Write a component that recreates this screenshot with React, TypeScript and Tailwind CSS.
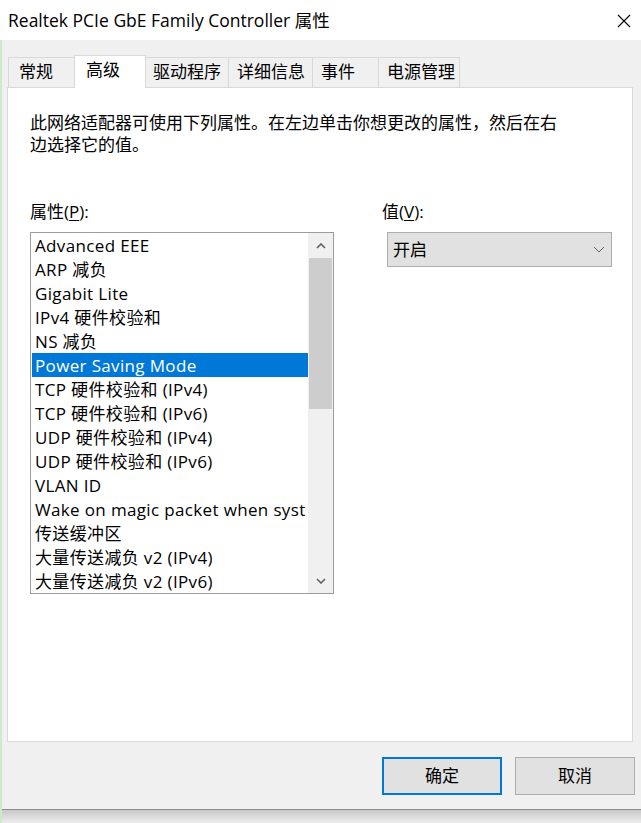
import React from 'react';

const items = [
  'Advanced EEE',
  'ARP 减负',
  'Gigabit Lite',
  'IPv4 硬件校验和',
  'NS 减负',
  'Power Saving Mode',
  'TCP 硬件校验和 (IPv4)',
  'TCP 硬件校验和 (IPv6)',
  'UDP 硬件校验和 (IPv4)',
  'UDP 硬件校验和 (IPv6)',
  'VLAN ID',
  'Wake on magic packet when syst',
  '传送缓冲区',
  '大量传送减负 v2 (IPv4)',
  '大量传送减负 v2 (IPv6)',
];

// 标签页：宽度和左内边距按截图量出来
const tabs = [
  { label: '常规', w: 'w-[68px]', pl: 'pl-[10px]' },
  { label: '高级', selected: true },
  { label: '驱动程序', w: 'w-[84px]', pl: 'pl-[8px]' },
  { label: '详细信息', w: 'w-[84px]', pl: 'pl-[8px]' },
  { label: '事件', w: 'w-[66px]', pl: 'pl-[8px]' },
  { label: '电源管理', w: 'w-[82px]', pl: 'pl-[8px]' },
];

function Chevron({ up, className }: { up?: boolean; className?: string }) {
  return (
    <svg width="10" height="6" viewBox="0 0 10 6" className={className}>
      <polyline
        points={up ? '1,5 5,1 9,5' : '1,1 5,5 9,1'}
        fill="none"
        stroke="#606060"
        strokeWidth="1.6"
      />
    </svg>
  );
}

export default function App() {
  const selected = 5;

  return (
    <div className="w-[641px] h-[823px] flex flex-col bg-[#f0f0f0] overflow-hidden text-black font-['Open_Sans','Noto_Sans_CJK_SC',sans-serif] text-[17px]">
      {/* 标题栏 */}
      <div className="h-[40px] shrink-0 bg-white flex items-center justify-between pl-[8px] pr-[10px]">
        <span className="text-[17.5px]">Realtek PCIe GbE Family Controller 属性</span>
        <svg width="14" height="14" viewBox="0 0 14 14" className="mt-[1px]">
          <path d="M1 1 L13 13 M13 1 L1 13" stroke="#000" strokeWidth="1.1" />
        </svg>
      </div>

      <div className="flex-1 flex flex-col border-l-2 border-[#cfe8cf]">
        {/* 标签 */}
        <div className="h-[47px] shrink-0 flex items-end pl-[6px]">
          {tabs.map((t) =>
            t.selected ? (
              <div
                key={t.label}
                className="relative z-10 -mx-[2px] -mb-px w-[72px] h-[33px] bg-white border border-b-0 border-[#d9d9d9] pl-[11px] pt-[3px] leading-[22px]"
              >
                {t.label}
              </div>
            ) : (
              <div
                key={t.label}
                className={`${t.w} ${t.pl} h-[30px] border-t border-l last:border-r border-[#d9d9d9] bg-[#f0f0f0] pt-[3px] leading-[22px]`}
              >
                {t.label}
              </div>
            )
          )}
        </div>

        {/* 内容面板 */}
        <div className="ml-[5px] w-[626px] h-[655px] shrink-0 bg-white border border-[#d9d9d9] pl-[22px] pt-[24px]">
          <p className="leading-[22px]">
            此网络适配器可使用下列属性。在左边单击你想更改的属性，然后在右
            <br />
            边选择它的值。
          </p>

          <div className="flex mt-[45px]">
            <div className="w-[304px]">
              <div className="leading-[22px]">
                属性(<span className="underline underline-offset-2">P</span>):
              </div>
              <div className="mt-[9px] h-[362px] border border-[#9c9c9c] flex">
                <div className="flex-1 pl-px overflow-hidden">
                  {items.map((it, i) => (
                    <div
                      key={it}
                      className={`h-[24px] leading-[26px] pl-[3px] tracking-[0.35px] whitespace-nowrap overflow-hidden ${
                        i === selected ? 'bg-[#0078d7] text-white' : ''
                      }`}
                    >
                      {it}
                    </div>
                  ))}
                </div>
                <div className="w-[25px] bg-[#f0f0f0] flex flex-col">
                  <div className="h-[25px] flex items-center justify-center">
                    <Chevron up />
                  </div>
                  <div className="h-[151px] mx-px bg-[#cdcdcd]" />
                  <div className="flex-1" />
                  <div className="h-[25px] flex items-center justify-center">
                    <Chevron />
                  </div>
                </div>
              </div>
            </div>

            <div className="ml-[48px]">
              <div className="leading-[22px]">
                值(<span className="underline underline-offset-2">V</span>):
              </div>
              <div className="mt-[9px] ml-[5px] w-[225px] h-[35px] bg-[#e1e1e1] border border-[#adadad] flex items-center justify-between pl-[5px] pr-[6px]">
                <span>开启</span>
                <svg width="12" height="7" viewBox="0 0 12 7">
                  <polyline points="1,1 6,6 11,1" fill="none" stroke="#606060" strokeWidth="1" />
                </svg>
              </div>
            </div>
          </div>
        </div>

        {/* 按钮 */}
        <div className="mt-[15px] flex justify-end gap-[13px] pr-[6px]">
          <button className="w-[120px] h-[38px] bg-[#e1e1e1] border-2 border-[#0078d7]">确定</button>
          <button className="w-[120px] h-[38px] bg-[#e1e1e1] border border-[#adadad]">取消</button>
        </div>

        <div className="mt-[14px] h-px bg-[#8a8a8a]" />
        <div className="flex-1 bg-gradient-to-b from-[#c9c9c9] to-[#ececec]" />
      </div>
    </div>
  );
}
